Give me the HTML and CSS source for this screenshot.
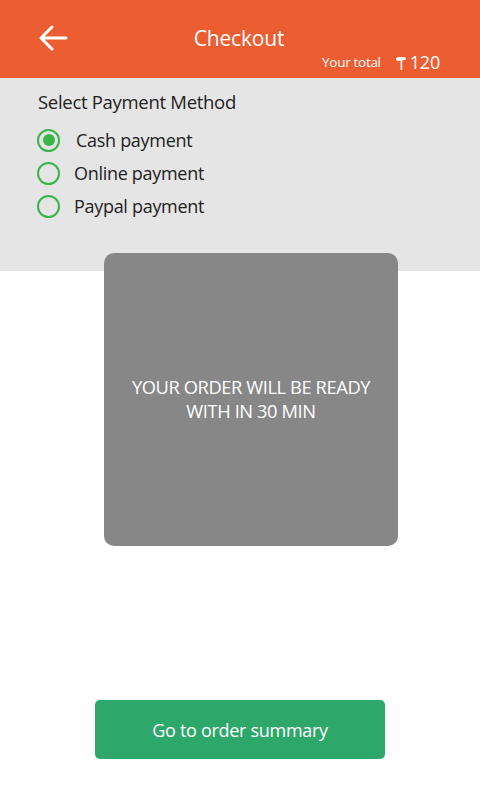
FILE: index.html
```html
<!DOCTYPE html>
<html>
<head>
<meta charset="utf-8">
<link rel="stylesheet" href="styles.css">
</head>
<body>
<div class="app">
  <header class="header">
    <div class="top-row">
      <svg class="back" width="30" height="26" viewBox="0 0 30 26">
        <path d="M28 13H3M14 2L3 13l11 11" fill="none" stroke="#fff" stroke-width="3" stroke-linecap="round" stroke-linejoin="round"/>
      </svg>
      <h1 class="title">Checkout</h1>
      <span></span>
    </div>
    <div class="total-row">
      <span class="total-label">Your total</span>
      <svg class="cur" width="12" height="16" viewBox="0 0 12 16">
        <path d="M1 4.3Q1 2 4.5 2L9.5 2.3Q11.3 2.7 11 4.2Q10.5 5.3 7.2 5.4L7.2 15H5.6L5.6 6Q1 6.4 1 4.3Z" fill="#fff"/>
      </svg>
      <span class="total-value">120</span>
    </div>
  </header>
  <section class="payment">
    <div class="pay-title">Select Payment Method</div>
    <ul class="options">
      <li class="option selected"><span class="radio"></span><span class="opt-label">Cash payment</span></li>
      <li class="option"><span class="radio"></span><span class="opt-label">Online payment</span></li>
      <li class="option"><span class="radio"></span><span class="opt-label">Paypal payment</span></li>
    </ul>
  </section>
  <div class="card">
    <p class="card-text">YOUR ORDER WILL BE READY<br>WITH IN 30 MIN</p>
  </div>
  <div class="actions">
    <button class="cta">Go to order summary</button>
  </div>
</div>
</body>
</html>
```

FILE: styles.css
```css
* { box-sizing: border-box; }
html, body { margin: 0; padding: 0; background: #fff; }
body { font-family: "Open Sans", "Noto Sans", sans-serif; }
.app { width: 480px; height: 800px; display: flex; flex-direction: column; }
.header { background: #ec5d32; height: 78px; padding: 0 40px 0 38px; display: flex; flex-direction: column; }
.top-row { display: grid; grid-template-columns: 1fr auto 1fr; align-items: center; padding-top: 25px; height: 51px; }
.back { display: block; }
.title { margin: 0; color: #fff; font-size: 21px; font-weight: 400; line-height: 26px; letter-spacing: -0.2px; }
.total-row { display: flex; justify-content: flex-end; align-items: center; height: 22px; color: #fff; }
.total-label { font-size: 13.5px; letter-spacing: -0.3px; margin-right: 14px; }
.cur { margin-right: 3px; margin-top: 1px; }
.total-value { font-size: 18px; letter-spacing: -0.2px; }
.payment { background: #e5e5e5; height: 193px; padding: 12px 38px 0; }
.pay-title { color: #222; font-size: 18.5px; line-height: 24px; letter-spacing: -0.3px; }
.options { list-style: none; margin: 14px 0 0; padding: 0; display: flex; flex-direction: column; gap: 9px; }
.option { display: flex; align-items: center; height: 24px; }
.radio { width: 23px; height: 23px; border: 2.5px solid #3ab54a; border-radius: 50%; margin-left: -1px; margin-right: 14px; display: flex; align-items: center; justify-content: center; }
.option.selected .radio::after { content: ""; width: 12px; height: 12px; border-radius: 50%; background: #3ab54a; }
.option.selected .opt-label { margin-left: 2px; }
.opt-label { color: #222; font-size: 18px; letter-spacing: -0.3px; }
.card { margin: -18px 0 0 104px; width: 294px; height: 293px; background: #878787; border-radius: 10px; display: flex; align-items: center; justify-content: center; }
.card-text { margin: 0; color: #fff; text-align: center; font-size: 18.3px; line-height: 24px; letter-spacing: -0.4px; padding-bottom: 2px; }
.actions { display: flex; justify-content: center; padding: 154px 0 0 0; }
.cta { width: 290px; height: 59px; margin-left: 0; background: #2ea76a; border: 0; border-radius: 5px; color: #fff; font-family: "Open Sans", "Noto Sans", sans-serif; font-size: 18px; letter-spacing: -0.3px; }
```
